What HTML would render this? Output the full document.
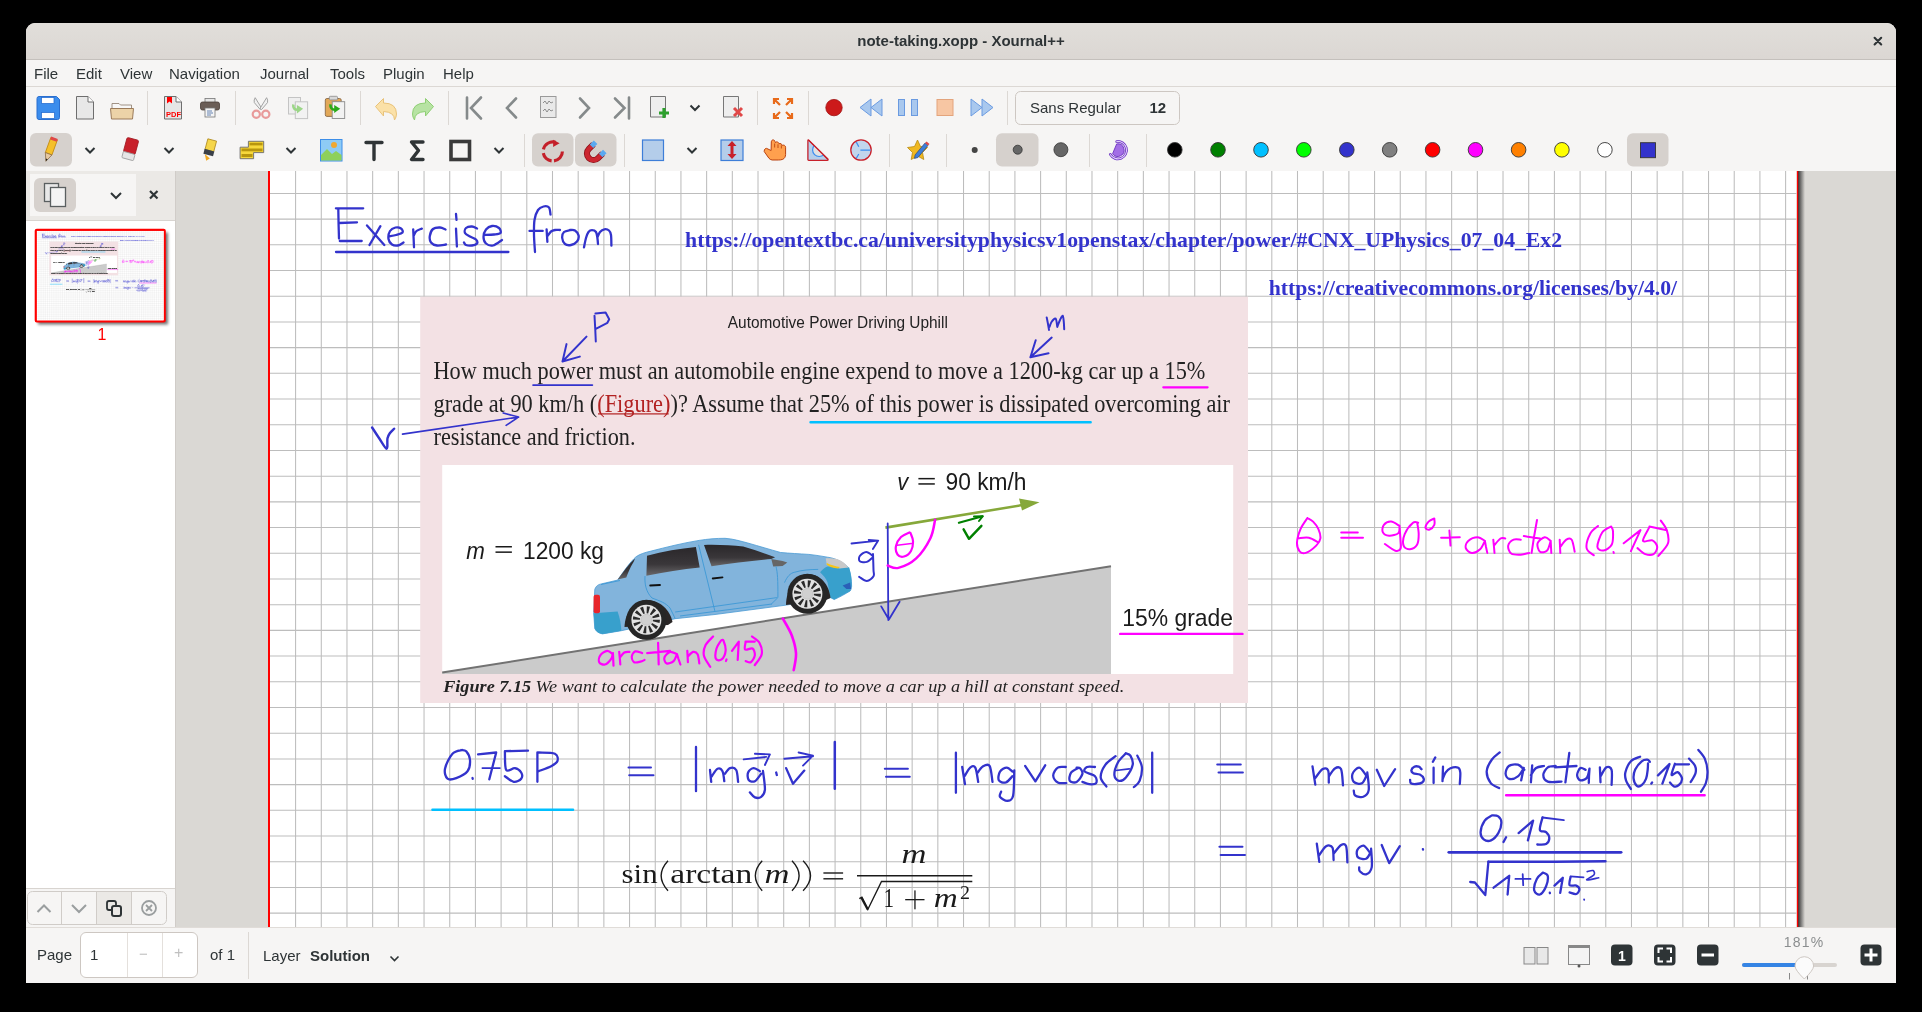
<!DOCTYPE html>
<html><head><meta charset="utf-8">
<style>
*{box-sizing:border-box}
html,body{margin:0;padding:0}
body{width:1922px;height:1012px;background:#000;position:relative;overflow:hidden;font-family:"Liberation Sans",sans-serif;color:#2e3436}
.a{position:absolute}
svg,div{-webkit-font-smoothing:antialiased}
body>svg,body>div{will-change:transform}
.menu span{position:absolute;top:0;font-size:15px;color:#2e3436}
</style></head><body>
<div class="a" style="left:26px;top:23px;width:1870px;height:960px;background:#f6f5f4;border-radius:9px 9px 0 0;overflow:hidden">
  <div class="a" style="left:0;top:0;width:1870px;height:37px;background:linear-gradient(#e1deda,#dbd7d3);border-bottom:1px solid #c4c0bc"></div>
</div>
<div class="a" style="left:26px;top:32px;width:1870px;text-align:center;font-weight:bold;font-size:15px;color:#2e3436">note-taking.xopp - Xournal++</div>
<svg class="a" style="left:1868px;top:32px" width="20" height="20" viewBox="1868 32 20 20"><path d="M1874.6 37.8L1881.2 44.4M1881.2 37.8L1874.6 44.4" stroke="#2e3436" stroke-width="2.1" stroke-linecap="round"/></svg>
<div class="menu a" style="left:0;top:65px;width:1922px;height:20px">
  <span style="left:34px">File</span><span style="left:76px">Edit</span><span style="left:120px">View</span><span style="left:169px">Navigation</span><span style="left:260px">Journal</span><span style="left:330px">Tools</span><span style="left:383px">Plugin</span><span style="left:443px">Help</span>
</div>
<div class="a" style="left:26px;top:86px;width:1870px;height:1px;background:#dcd8d4"></div>
<svg class="a" style="left:0;top:0" width="1922" height="1012" viewBox="0 0 1922 1012">
<g id="tb1">
 <!-- separators -->
 <g fill="#dcd8d4">
  <rect x="147" y="91" width="1" height="34"/><rect x="235" y="91" width="1" height="34"/><rect x="360" y="91" width="1" height="34"/>
  <rect x="448" y="91" width="1" height="34"/><rect x="757" y="91" width="1" height="34"/><rect x="808" y="91" width="1" height="34"/><rect x="1007" y="91" width="1" height="34"/>
  <rect x="524" y="134" width="1" height="33"/><rect x="624" y="134" width="1" height="33"/><rect x="889" y="134" width="1" height="33"/><rect x="946" y="134" width="1" height="33"/><rect x="1089" y="134" width="1" height="33"/><rect x="1146" y="134" width="1" height="33"/>
 </g>
 <!-- save -->
 <path d="M37 98.5q0-2 2-2h17.5l3 3v18q0 2-2 2h-18.5q-2 0-2-2z" fill="#3b8ded" stroke="#2a6fd0" stroke-width="1"/>
 <rect x="41.5" y="97.5" width="12.5" height="6" fill="#fff" stroke="#2a6fd0" stroke-width="0.8"/>
 <rect x="41.5" y="112.5" width="13" height="6" fill="#fff" stroke="#2a6fd0" stroke-width="0.8"/>
 <!-- new doc -->
 <path d="M76.5 96.5h11.5l5.5 5.5v17h-17z" fill="#e8e8e8" stroke="#6e6e6e" stroke-width="1"/>
 <path d="M88 96.5v5.5h5.5" fill="#fff" stroke="#6e6e6e" stroke-width="1"/>
 <!-- folder -->
 <path d="M112 103.5h7l1.5 1.5h11v5h-19.5z" fill="#f7f7f7" stroke="#8b7a6a" stroke-width="0.8"/>
 <path d="M110.5 108.5h23l-1 10.5h-21z" fill="#ecd3a8" stroke="#9b7b5a" stroke-width="1"/>
 <!-- pdf -->
 <path d="M164.5 96.5h11.5l5.5 5.5v17h-17z" fill="#e6e6e6" stroke="#6e6e6e" stroke-width="1"/>
 <path d="M176 96.5v5.5h5.5" fill="#fff" stroke="#6e6e6e" stroke-width="1"/>
 <path d="M167 97h5v6.5l-2.5-2l-2.5 2z" fill="#f00"/>
 <text x="166" y="117" font-size="7.5" font-weight="bold" fill="#f00" font-family="Liberation Sans">PDF</text>
 <!-- printer -->
 <rect x="205" y="98.5" width="10" height="4" fill="#e6e6e6" stroke="#777" stroke-width="0.8"/>
 <rect x="200.5" y="102" width="19" height="8" rx="2" fill="#6b5e57" stroke="#4a3f39" stroke-width="0.8"/>
 <rect x="205" y="108" width="10" height="9" fill="#f4f4f4" stroke="#777" stroke-width="0.8"/>
 <path d="M207 111h5M207 113h6M207 115h4" stroke="#5577aa" stroke-width="0.9"/>
 <!-- cut -->
 <path d="M255.2 97.7Q253.6 100 254.3 102.6L260.3 109.6L261.6 108.2z" fill="#f0f0f0" stroke="#9a9a9a" stroke-width="0.9" stroke-linejoin="round"/>
 <path d="M266.6 97.7Q268.2 100 267.5 102.6L261.5 109.6L260.2 108.2z" fill="#f0f0f0" stroke="#9a9a9a" stroke-width="0.9" stroke-linejoin="round"/>
 <circle cx="256.3" cy="114.2" r="3.6" fill="none" stroke="#e89a9a" stroke-width="2.2"/>
 <circle cx="265.8" cy="114.2" r="3.6" fill="none" stroke="#e89a9a" stroke-width="2.2"/>
 <!-- copy -->
 <rect x="288.5" y="97.5" width="12" height="16.5" fill="#efefef" stroke="#c4c4c4"/>
 <rect x="295.3" y="101.8" width="12.3" height="16.8" fill="#f2f2f2" stroke="#c4c4c4"/>
 <path d="M293.3 104.5Q292.8 109.5 297.5 109.8" fill="none" stroke="#9cd688" stroke-width="2.6"/>
 <path d="M296.9 105L303.1 108.8L296.9 113.4z" fill="#9cd688"/>
 <!-- paste -->
 <rect x="325.3" y="98.5" width="15.9" height="17.9" rx="1.6" fill="#e2a858" stroke="#8a6a48" stroke-width="0.9"/>
 <rect x="329.3" y="96.3" width="8.2" height="3.6" rx="1" fill="#d8d8d8" stroke="#8a8a8a" stroke-width="0.8"/>
 <rect x="332.2" y="101.7" width="12.5" height="16.8" fill="#f2f2f2" stroke="#8a8a8a" stroke-width="0.9"/>
 <path d="M330.5 104.3Q330 109.5 335 109.8" fill="none" stroke="#2aaa1a" stroke-width="2.6"/>
 <path d="M334.2 105L340.2 108.8L334.2 113.1z" fill="#2aaa1a"/>
 <!-- undo -->
 <path d="M375.5 106.5l8-8v4.5q13 0 13 11q0 3-2 6q0-8-11-8.5v4.5z" fill="#fbe1a8" stroke="#e8c27a" stroke-width="1"/>
 <!-- redo -->
 <path d="M433.5 106.5l-8-8v4.5q-13 0-13 11q0 3 2 6q0-8 11-8.5v4.5z" fill="#b7e3a3" stroke="#8fcf74" stroke-width="1"/>
 <!-- first/prev/goto/next/last -->
 <g stroke="#858a8b" stroke-width="2.6" fill="none" stroke-linecap="round">
  <path d="M467 97.5v21M481 97.5l-10 10.5l10 10.5"/>
  <path d="M516 98.5l-9 9.5l9 9.5"/>
  <path d="M580 98.5l9 9.5l-9 9.5"/>
  <path d="M615 98.5l9.5 9.5l-9.5 9.5M629 97.5v21"/>
 </g>
 <rect x="540.5" y="96.5" width="15.5" height="21" fill="#e9e9e9" stroke="#9a9a9a"/>
 <path d="M543 103l2-2l2 3l2-3l2 2l2-1M543 111l2-2l2 3l2-3l2 2l2-1" stroke="#777" stroke-width="0.8" fill="none"/>
 <!-- insert page -->
 <path d="M650.5 96.5h15v20.5h-15z" fill="#eee" stroke="#777"/>
 <path d="M664 108v10M659 113h10" stroke="#2da02d" stroke-width="3.2"/>
 <!-- dropdown -->
 <path d="M690.5 105.5l4.5 4.5l4.5-4.5" stroke="#2e3436" stroke-width="2" fill="none"/>
 <!-- delete page -->
 <path d="M723.5 96.5h15v20.5h-15z" fill="#eee" stroke="#777"/>
 <path d="M734 108l8 8M742 108l-8 8" stroke="#e04848" stroke-width="3"/>
 <!-- fullscreen -->
 <g stroke="#e86a1a" stroke-width="2.2" fill="none">
  <path d="M774 99l6 6M774 104v-5h5M792 99l-6 6M792 104v-5h-5M774 118l6-6M774 113v5h5M792 118l-6-6M792 113v5h-5"/>
 </g>
 <!-- record -->
 <circle cx="834" cy="107.6" r="8.2" fill="#cc1a1a" stroke="#a01010" stroke-width="0.8"/>
 <!-- rewind -->
 <path d="M860 107.5l11-8.5v17zM871 107.5l11-8.5v17z" fill="#a9c8ee" stroke="#6a9ae0" stroke-width="1"/>
 <!-- pause -->
 <rect x="898.5" y="99.5" width="6" height="16" fill="#a9c8ee" stroke="#6a9ae0"/><rect x="911.5" y="99.5" width="6" height="16" fill="#a9c8ee" stroke="#6a9ae0"/>
 <!-- stop -->
 <rect x="937" y="99.5" width="16" height="16" fill="#f7c6a3" stroke="#e3a47c"/>
 <!-- ffwd -->
 <path d="M993 107.5l-11-8.5v17zM982 107.5l-11-8.5v17z" fill="#a9c8ee" stroke="#6a9ae0" stroke-width="1"/>
 <!-- font button -->
 <rect x="1015.5" y="91.5" width="164" height="33" rx="5" fill="#f6f5f4" stroke="#cdc7c2"/>
 <text x="1030" y="113.3" font-size="15" fill="#2e3436" font-family="Liberation Sans">Sans Regular</text>
 <text x="1149.5" y="113.3" font-size="15" font-weight="bold" fill="#2e3436" font-family="Liberation Sans">12</text>
</g>
<g id="tb2">
 <!-- selected bgs -->
 <rect x="30" y="133" width="42" height="33.5" rx="6" fill="#d6d1cd"/>
 <rect x="532" y="133.3" width="41.5" height="33.2" rx="6" fill="#d6d1cd"/>
 <rect x="575" y="133.3" width="41.5" height="33.2" rx="6" fill="#d6d1cd"/>
 <rect x="996" y="133.3" width="42.5" height="33.2" rx="6" fill="#d6d1cd"/>
 <rect x="1627" y="133.2" width="41.5" height="33.3" rx="6" fill="#d6d1cd"/>
 <!-- pencil -->
 <g transform="rotate(20 50 150)">
  <rect x="46.5" y="138" width="7" height="16" fill="#f5c02a" stroke="#c28a10" stroke-width="0.8"/>
  <rect x="46.5" y="137" width="7" height="3" fill="#e04848"/>
  <path d="M46.5 154l3.5 8l3.5-8z" fill="#e6c8a0" stroke="#8a6a40" stroke-width="0.7"/>
  <path d="M49 159.5l1 2.5l1-2.5z" fill="#222"/>
 </g>
 <!-- chevrons -->
 <g stroke="#2e3436" stroke-width="2" fill="none">
  <path d="M85.5 148l4.5 4.5l4.5-4.5"/><path d="M164.5 148l4.5 4.5l4.5-4.5"/><path d="M286.5 148l4.5 4.5l4.5-4.5"/>
  <path d="M494.5 148l4.5 4.5l4.5-4.5"/><path d="M687.5 148l4.5 4.5l4.5-4.5"/>
 </g>
 <!-- eraser -->
 <g transform="rotate(15 130 150)">
  <rect x="124" y="138.5" width="12" height="15" rx="1.5" fill="#c8202a" stroke="#a01820" stroke-width="0.8"/>
  <rect x="124" y="153" width="12" height="6.5" rx="1" fill="#e6e6e6" stroke="#999" stroke-width="0.8"/>
 </g>
 <!-- highlighter -->
 <g transform="rotate(15 209 150)">
  <rect x="205" y="139.5" width="9" height="11" fill="#f6d64a" stroke="#b08a20" stroke-width="0.8"/>
  <rect x="204.5" y="150" width="10" height="5" fill="#3a4048"/>
  <path d="M206 155l3 6l3-3z" fill="#f0a820"/>
 </g>
 <!-- word text -->
 <path d="M240.1 147.2H248.4V141.3H263.7V152.6H253.6V158.7H240.1z" fill="#f7d83c" stroke="#6a6a6a" stroke-width="0.9"/>
 <g fill="#b8960e"><rect x="249.5" y="142.8" width="13" height="2.6"/><rect x="241.5" y="148.5" width="21" height="2.8"/><rect x="241.5" y="154" width="11" height="3"/></g>
 <!-- image -->
 <rect x="320.5" y="139.5" width="21.5" height="21.5" fill="#8ecbf5" stroke="#3d8ee8"/>
 <circle cx="334" cy="145" r="3" fill="#f0a830"/>
 <path d="M321 155l6-6l5 5l4-3l5.5 4v5.5h-20.5z" fill="#8ed05a"/>
 <!-- T -->
 <path d="M366 142.5h16M374 142.5v17" stroke="#2f3436" stroke-width="3.4" stroke-linecap="round" fill="none"/>
 <!-- sigma -->
 <path d="M423 142h-11.5l7 8.5l-7 9h11.5" stroke="#2f3436" stroke-width="3.4" stroke-linecap="round" stroke-linejoin="round" fill="none"/>
 <!-- rect -->
 <rect x="451" y="141.5" width="18.5" height="18" fill="none" stroke="#3a3a3a" stroke-width="3.6"/>
 <!-- rotation snapping -->
 <g fill="none" stroke="#c4202a" stroke-width="3.1">
  <path d="M543.4 149.4A9.6 9.6 0 0 1 555.5 142.3"/>
  <path d="M543.3 153.1A9.6 9.6 0 0 0 551.6 160.9"/>
  <path d="M554 160.9A9.6 9.6 0 0 0 562.4 151.4"/>
 </g>
 <path d="M553.1 139.8L559.6 143.3L553.1 147z" fill="#c4202a"/>
 <!-- magnet -->
 <path d="M593.4 144.4L588.9 148.9A6.5 6.5 0 0 0 598.1 158.1L602.6 153.6" fill="none" stroke="#8a1018" stroke-width="6.2"/>
 <path d="M593.4 144.4L588.9 148.9A6.5 6.5 0 0 0 598.1 158.1L602.6 153.6" fill="none" stroke="#cc2630" stroke-width="4.6"/>
 <path d="M595.6 142.2L591.5 146.3M604.8 151.4L600.7 155.5" stroke="#5aa8f0" stroke-width="5"/>
 <!-- select rect -->
 <rect x="642.5" y="140" width="21" height="20.5" fill="#b4cdea" stroke="#3d7ed8" stroke-width="1.2"/>
 <!-- vertical space -->
 <rect x="721" y="140" width="22" height="20.5" fill="#b4cdea" stroke="#3d7ed8" stroke-width="1.2"/>
 <path d="M732 143v14" stroke="#c8202a" stroke-width="3"/><path d="M727.5 146l4.5-5l4.5 5zM727.5 154l4.5 5l4.5-5z" fill="#c8202a"/>
 <!-- hand -->
 <path d="M764.2 151.5L764.4 150C765 148.5 766 148.2 766.6 148.4L771.1 150.5L771.3 141.8C771.5 140.3 772.3 139.8 773.3 139.9C774.3 140 774.9 140.7 775.1 141.8L775.4 142.6C775.8 141.9 776.6 141.7 777.4 142C778.4 142.4 778.9 143 779.1 143.7C779.6 143.4 780.4 143.4 781 143.8C781.7 144.2 782.1 144.8 782.3 145.3C782.9 145 783.8 145 784.5 145.4C785.2 145.8 785.6 146.5 785.6 147.3V154.6C785.5 156.8 784.5 158.5 782.8 159.3C781.5 159.8 780 160 778.6 160H772.2C770.8 159.9 769.8 159.2 768.9 158.2z" fill="#ffa04e" stroke="#b8400e" stroke-width="1"/>
 <path d="M774.6 143.5V147.5M778 144.3V148M781.4 145.3V148.5" stroke="#c8561a" stroke-width="1.1"/>
 <!-- setsquare -->
 <defs><clipPath id="sqc"><path d="M807.9 139.9L827.9 159.5L807.9 160.2z"/></clipPath></defs>
 <path d="M808.4 139.9L827.9 159.2Q828.6 160.3 827.3 160.3H808.7Q807.9 160.3 807.9 159.5V140.5Q808 139.6 808.4 139.9z" fill="#b6cfea" stroke="#c8202a" stroke-width="1.3" stroke-linejoin="round"/>
 <circle cx="819.2" cy="149.9" r="6.6" fill="#e2e2e2" stroke="#3a8ef0" stroke-width="1.2" clip-path="url(#sqc)"/>
 <path d="M808.4 139.9L827.9 159.2" stroke="#c8202a" stroke-width="1.3"/>
 <!-- compass -->
 <circle cx="861" cy="150" r="10.2" fill="#c2d6ec" stroke="#c8202a" stroke-width="1.3"/>
 <path d="M860.4 150.2H870.6M856.3 142.1L858.8 146.8M856.3 158.3L858.8 154" stroke="#3a8ef0" stroke-width="1.2"/>
 <!-- star -->
 <path d="M917.5 140l3 6.5l7 1l-5 5l1.3 7l-6.3-3.5l-6.3 3.5l1.3-7l-5-5l7-1z" fill="#f0b820" stroke="#b88a10" stroke-width="0.8"/>
 <path d="M915 155l10-12l3 2.5l-10 12l-3.5 1z" fill="#3d7ed8" stroke="#2a3f6a" stroke-width="0.6"/>
 <path d="M925 143l1.5-1.5l3 2.5l-1.5 1.5z" fill="#e04848"/>
 <!-- thickness dots -->
 <circle cx="974.7" cy="150" r="3" fill="#444"/>
 <circle cx="1017.7" cy="149.7" r="4.5" fill="#666" stroke="#333" stroke-width="0.8"/>
 <circle cx="1060.9" cy="149.7" r="7" fill="#666" stroke="#333" stroke-width="0.8"/>
 <!-- fill -->
 <path d="M1116.7 141.5A8.7 8.7 0 1 1 1110.3 154.45" fill="none" stroke="#6a30c0" stroke-width="2.7" stroke-linecap="round"/>
 <path d="M1116.7 141.5A8.7 8.7 0 1 1 1110.3 154.45" fill="none" stroke="#e2ccff" stroke-width="1.1" stroke-linecap="round"/>
 <path d="M1116.7 143.9A6.3 6.3 0 1 1 1112.6 153.7z" fill="#a36ee6" stroke="#6a30c0" stroke-width="0.9"/>
 <!-- colors -->
 <g stroke="#333" stroke-width="0.9">
  <circle cx="1174.8" cy="149.8" r="7.3" fill="#000"/>
  <circle cx="1218" cy="149.8" r="7.3" fill="#008000"/>
  <circle cx="1261" cy="149.8" r="7.3" fill="#00c0ff"/>
  <circle cx="1303.8" cy="149.8" r="7.3" fill="#00ff00"/>
  <circle cx="1346.8" cy="149.8" r="7.3" fill="#3333cc"/>
  <circle cx="1389.7" cy="149.8" r="7.3" fill="#808080"/>
  <circle cx="1432.6" cy="149.8" r="7.3" fill="#ff0000"/>
  <circle cx="1475.5" cy="149.8" r="7.3" fill="#ff00ff"/>
  <circle cx="1518.6" cy="149.8" r="7.3" fill="#ff8000"/>
  <circle cx="1561.9" cy="149.8" r="7.3" fill="#ffff00"/>
  <circle cx="1604.9" cy="149.8" r="7.3" fill="#ffffff"/>
  <rect x="1640.5" y="142.7" width="15" height="15" fill="#3333cc"/>
 </g>
</g>
</svg>

<div class="a" style="left:176px;top:171px;width:1720px;height:756px;background:#dad8d4"></div>
<svg class="a" style="left:0;top:0" width="1922" height="1012" viewBox="0 0 1922 1012">
 <defs><clipPath id="cv"><rect x="176" y="171" width="1720" height="756"/></clipPath>
 <linearGradient id="shR" x1="0" x2="1"><stop offset="0" stop-color="#333"/><stop offset="1" stop-color="#dad8d4"/></linearGradient>
 <clipPath id="thc"><rect x="36.8" y="230.8" width="127" height="89.3"/></clipPath></defs>
 <g clip-path="url(#cv)">
  <rect x="1798" y="171" width="7" height="756" fill="url(#shR)"/>
  
<g id="page">
 <rect x="269.9" y="167.7" width="1526.5" height="1079.3" fill="#fff"/>
 <path d="M295.59 167.7V1247M321.28 167.7V1247M346.97 167.7V1247M372.66 167.7V1247M398.35 167.7V1247M424.04 167.7V1247M449.73 167.7V1247M475.42 167.7V1247M501.11 167.7V1247M526.8 167.7V1247M552.49 167.7V1247M578.18 167.7V1247M603.87 167.7V1247M629.56 167.7V1247M655.25 167.7V1247M680.94 167.7V1247M706.63 167.7V1247M732.32 167.7V1247M758.01 167.7V1247M783.7 167.7V1247M809.39 167.7V1247M835.08 167.7V1247M860.77 167.7V1247M886.46 167.7V1247M912.15 167.7V1247M937.84 167.7V1247M963.53 167.7V1247M989.22 167.7V1247M1014.91 167.7V1247M1040.6 167.7V1247M1066.29 167.7V1247M1091.98 167.7V1247M1117.67 167.7V1247M1143.36 167.7V1247M1169.05 167.7V1247M1194.74 167.7V1247M1220.43 167.7V1247M1246.12 167.7V1247M1271.81 167.7V1247M1297.5 167.7V1247M1323.19 167.7V1247M1348.88 167.7V1247M1374.57 167.7V1247M1400.26 167.7V1247M1425.95 167.7V1247M1451.64 167.7V1247M1477.33 167.7V1247M1503.02 167.7V1247M1528.71 167.7V1247M1554.4 167.7V1247M1580.09 167.7V1247M1605.78 167.7V1247M1631.47 167.7V1247M1657.16 167.7V1247M1682.85 167.7V1247M1708.54 167.7V1247M1734.23 167.7V1247M1759.92 167.7V1247M1785.61 167.7V1247M269.9 193.4H1796.4M269.9 219.11H1796.4M269.9 244.81H1796.4M269.9 270.51H1796.4M269.9 296.22H1796.4M269.9 321.92H1796.4M269.9 347.63H1796.4M269.9 373.34H1796.4M269.9 399.04H1796.4M269.9 424.75H1796.4M269.9 450.45H1796.4M269.9 476.15H1796.4M269.9 501.86H1796.4M269.9 527.56H1796.4M269.9 553.27H1796.4M269.9 578.98H1796.4M269.9 604.68H1796.4M269.9 630.38H1796.4M269.9 656.09H1796.4M269.9 681.79H1796.4M269.9 707.5H1796.4M269.9 733.2H1796.4M269.9 758.91H1796.4M269.9 784.61H1796.4M269.9 810.32H1796.4M269.9 836.02H1796.4M269.9 861.73H1796.4M269.9 887.43H1796.4M269.9 913.14H1796.4M269.9 938.84H1796.4M269.9 964.55H1796.4M269.9 990.25H1796.4M269.9 1015.96H1796.4M269.9 1041.66H1796.4M269.9 1067.37H1796.4M269.9 1093.08H1796.4M269.9 1118.78H1796.4M269.9 1144.48H1796.4M269.9 1170.19H1796.4M269.9 1195.89H1796.4M269.9 1221.6H1796.4" stroke="#bdbdbd" style="stroke-width:calc(var(--g,1)*1.05px)" fill="none"/>
 <text x="685.1" y="246.5" font-family="Liberation Serif" font-weight="bold" font-size="21.5" fill="#3333cc" style="stroke:var(--tsb,none);stroke-width:var(--tsw,0)" textLength="877" lengthAdjust="spacingAndGlyphs">https://opentextbc.ca/universityphysicsv1openstax/chapter/power/#CNX_UPhysics_07_04_Ex2</text>
 <text x="1268.8" y="294.5" font-family="Liberation Serif" font-weight="bold" font-size="21.5" fill="#3333cc" style="stroke:var(--tsb,none);stroke-width:var(--tsw,0)" textLength="408.3" lengthAdjust="spacingAndGlyphs">https://creativecommons.org/licenses/by/4.0/</text>
 <rect x="420.2" y="296.7" width="827.8" height="406.3" fill="#f3e1e4"/>
 <text x="727.8" y="327.8" style="stroke:var(--ts,none);stroke-width:var(--tsw,0)" font-family="Liberation Sans" font-size="16.6" fill="#222" textLength="220.1" lengthAdjust="spacingAndGlyphs">Automotive Power Driving Uphill</text>
 <g font-family="Liberation Serif" font-size="25" fill="#222" style="stroke:var(--ts,none);stroke-width:var(--tsw,0)">
  <text x="433.5" y="378.8" textLength="771.9" lengthAdjust="spacingAndGlyphs">How much power must an automobile engine expend to move a 1200-kg car up a 15%</text>
  <text x="433.5" y="411.5" textLength="796.5" lengthAdjust="spacingAndGlyphs">grade at 90 km/h (<tspan fill="#b22222">(Figure)</tspan>)? Assume that 25% of this power is dissipated overcoming air</text>
  <text x="433.5" y="445.2" textLength="202" lengthAdjust="spacingAndGlyphs">resistance and friction.</text>
 </g>
 <rect x="598" y="413.3" width="70.7" height="1.2" fill="#b22222"/>
 <rect x="442.2" y="465" width="791" height="209" fill="#fff"/>
 <path d="M442.2 672.5L1111 566.2V674H442.2z" fill="#cbcbcb"/>
 <path d="M442.2 672.5L1111 566.2" stroke="#727272" stroke-width="2"/>
 <path d="M885.4 527.6L1024 504.8" stroke="#86a83a" stroke-width="2.6"/>
 <path d="M1039.5 502.3L1019 498.5L1022 510.5z" fill="#86a83a"/>
 <g font-family="Liberation Sans" font-size="24.4" fill="#1a1a1a" style="stroke:var(--ts,none);stroke-width:var(--tsw,0)">
  <text x="466.3" y="558.8" font-style="italic" textLength="18.6" lengthAdjust="spacingAndGlyphs">m</text><rect x="495.5" y="546" width="16.4" height="1.5"/><rect x="495.5" y="551.4" width="16.4" height="1.5"/><text x="523" y="558.8" textLength="81" lengthAdjust="spacingAndGlyphs">1200 kg</text>
  <text x="897.3" y="490.3" font-style="italic" textLength="11" lengthAdjust="spacingAndGlyphs">v</text><rect x="918.4" y="477.9" width="16.4" height="1.5"/><rect x="918.4" y="483.2" width="16.4" height="1.5"/><text x="945.5" y="490.3" textLength="81" lengthAdjust="spacingAndGlyphs">90 km/h</text>
  <text x="1122.3" y="626.4" textLength="110.8" lengthAdjust="spacingAndGlyphs">15% grade</text>
 </g>
 <g id="car">
 <defs>
  <linearGradient id="win" x1="0" y1="0" x2="0" y2="1"><stop offset="0" stop-color="#2a272a"/><stop offset="0.6" stop-color="#3a373a"/><stop offset="1" stop-color="#6a686a"/></linearGradient>
 </defs>
 <path d="M593.7 613L594.8 589.3C596 586 598 584.5 601.3 583.9L617.6 580.1C624 571 630 562 636.1 556.7C640 554 645 552.5 650.2 551.3C667 547 683 543 699.1 540.4C708 539 716 538.3 725 538.3C733 538.8 740 541 747.8 543C760 546.5 770 549.5 780.7 552.5C790 553.3 799 553.8 808.9 554.4C815 555 821 556 827.6 557.2C834 558 842 561 848.3 567.5C851 574 851.6 580 851.6 586.3C851.5 588 851 590 850.1 591C845 594 840 597 834.2 599.5L830.4 597.6L786.3 605.1L715 614.5L675.2 618.7L621.4 630.7L602.4 633.9C598 633 596 631 594.8 628.5z" fill="#82b4dc" stroke="#4a9bd4" stroke-width="0.8"/>
 <path d="M593.7 613.3L617.6 611.6C620 618 621 625 621.4 630.7L602.4 633.9C598.5 633.5 596 631.5 594.8 628.5z" fill="#38a0cc"/>
 <rect x="593.6" y="594.8" width="6.4" height="18.5" rx="2" fill="#e8262c"/>
 <path d="M820.1 572.2C823 569 825 567.5 827.6 566.6L849.2 567.5C851 574 851.6 580 851.6 586.3L850.1 591L834.2 599.5L830.4 597.6C829 590 828 585 827.6 582.6C826 578 823 575 820.1 572.2z" fill="#38a0cc"/>
 <path d="M842.6 585.4L850.1 582.6L851.1 589.1L846.4 589.1z" fill="#2a60b8"/>
 <path d="M825.7 558.2C830 558 834 558.5 837 559.1C842 561 846 564 848.3 567.5L839.8 568.5C835 567.5 830 566.5 826.7 564.7z" fill="#c8c8c8"/>
 <path d="M826.7 563C831 565 836 566.5 840 567L838 568.5C833 568 829 566.5 826.7 564.7z" fill="#f5c518"/>
 <path d="M617.6 579.6C623 572 629 564 635 558.4C634 561 633.5 562 632.8 563.3C630 568 628 573 626.3 577.4z" fill="url(#win)"/>
 <path d="M647 555.7C663 551.5 680 548.5 695.9 547L699.7 567.6C682 569.5 664 572.5 646.4 575.8z" fill="url(#win)"/>
 <path d="M704 545C718 544.5 732 545.5 743.2 546.5C754 549.5 765 553.5 775.1 557.2L771.3 559.1C750 561 732 563.5 711.5 566.3z" fill="url(#win)"/>
 <path d="M771.3 559.1L782.6 561L787.3 562.4L782.6 566.1L773.2 566.6z" fill="#666"/>
 <g fill="none" stroke="#3d98d6" stroke-width="0.9">
  <path d="M698.6 544.8L714.9 611.1"/>
  <path d="M645 576C644.5 584 646 592 652 598C660 601 666 603 670 608C672 612 674 616 675.2 618.7"/>
  <path d="M776 566.6C777.5 572 778 580 777.9 597.6L771.3 604.1"/>
  <path d="M675.2 612L776.9 597.6M680 616L772 604"/>
  <path d="M784.5 582.6C787 577 790 573 794.8 572.2C802 570 810 569.5 818.2 569.4"/>
  <path d="M601 584.5L620 580.5"/>
 </g>
 <path d="M650.2 585.5L660 585M712.7 578.5L722.5 577.4" stroke="#111" stroke-width="1.8" stroke-linecap="round"/>
 <path d="M624.5 627C625 612 634 601 646.4 600C660 600 670 610 672.5 622L668 625z" fill="#2a2626"/>
 <path d="M786 605C786 590 795 575 807.4 574C820 574 829 584 830.5 598L826 600z" fill="#2a2626"/>
 <g>
  <circle cx="646.4" cy="619.8" r="20" fill="#262626"/>
  <circle cx="646.4" cy="619.8" r="15" fill="#e2e2e2"/>
  <circle cx="646.4" cy="619.8" r="10" fill="none" stroke="#2a2a2a" stroke-width="7" stroke-dasharray="2.4 2.84"/>
  <circle cx="646.4" cy="619.8" r="5.5" fill="#d0d0d0" stroke="#bbb" stroke-width="0.6"/>
  <circle cx="807.4" cy="593.8" r="20" fill="#262626"/>
  <circle cx="807.4" cy="593.8" r="15" fill="#e2e2e2"/>
  <circle cx="807.4" cy="593.8" r="10" fill="none" stroke="#2a2a2a" stroke-width="7" stroke-dasharray="2.4 2.84"/>
  <circle cx="807.4" cy="593.8" r="5.5" fill="#d0d0d0" stroke="#bbb" stroke-width="0.6"/>
 </g>
</g>

 <text x="443.2" y="691.9" style="stroke:var(--ts,none);stroke-width:var(--tsw,0)" font-family="Liberation Serif" font-style="italic" font-size="17.2" fill="#222" textLength="681" lengthAdjust="spacingAndGlyphs"><tspan font-weight="bold">Figure 7.15</tspan> We want to calculate the power needed to move a car up a hill at constant speed.</text>
 <g font-family="Liberation Serif" fill="#1a1a1a" style="stroke:var(--ts,none);stroke-width:var(--tsw,0)">
  <text x="621.6" y="883" font-size="27" textLength="36" lengthAdjust="spacingAndGlyphs">sin</text>
  <text x="670.3" y="883" font-size="27" textLength="82" lengthAdjust="spacingAndGlyphs">arctan</text>
  <text x="764.5" y="883" font-size="27" font-style="italic" textLength="25" lengthAdjust="spacingAndGlyphs">m</text>
  <path d="M668 860.8Q654.3 875.8 668 890.8M762.2 860.8Q748.5 875.8 762.2 890.8M792 860.8Q806.2 875.8 792 890.8M803.1 860.8Q817.9 875.8 803.1 890.8" fill="none" stroke="#1a1a1a" stroke-width="1.35"/>
  <rect x="823.4" y="872.3" width="19.7" height="1.4"/><rect x="823.4" y="878.1" width="19.7" height="1.4"/>
  <text x="901.5" y="862.8" font-size="27" font-style="italic" textLength="25" lengthAdjust="spacingAndGlyphs">m</text>
  <rect x="857" y="875" width="115.3" height="1.5"/>
  <path d="M859.3 898.6L861.9 897.1L867.8 909.5L881.5 881.5H972.3" fill="none" stroke="#1a1a1a" stroke-width="1.35"/>
  <path d="M861.5 897.8L867.8 909.5" stroke="#1a1a1a" stroke-width="2.4"/>
  <text x="883.6" y="907.1" font-size="27" textLength="10.5" lengthAdjust="spacingAndGlyphs">1</text>
  <rect x="905.2" y="899" width="19.3" height="1.3"/><rect x="914.3" y="890.4" width="1.3" height="18.9"/>
  <text x="933.8" y="907.1" font-size="27" font-style="italic" textLength="24" lengthAdjust="spacingAndGlyphs">m</text>
  <text x="960" y="898.6" font-size="19" textLength="10" lengthAdjust="spacingAndGlyphs">2</text>
 </g>
 <path d="M335.9 208.3L363.2 208.3M338.3 209L338.6 225L339 238.5M339 223L357 222.3M339.8 241L361.7 241M367 225.4L384.3 245M380.4 226.2L369.5 245M389 236.5C390.17 236.25 393.75 235.67 396 235C398.25 234.33 401.67 233.58 402.5 232.5C403.33 231.42 402.17 229.33 401 228.5C399.83 227.67 397.33 227.08 395.5 227.5C393.67 227.92 391.17 229.08 390 231C388.83 232.92 388.17 236.75 388.5 239C388.83 241.25 390.42 243.42 392 244.5C393.58 245.58 396.08 245.83 398 245.5C399.92 245.17 402.58 243 403.5 242.5M413.2 229.3L413.6 238L414 247.3M413.5 236C414 235.17 415.12 232.23 416.5 231C417.88 229.77 420.92 229 421.8 228.6M445.5 229.5C444.58 229.17 442.08 227.58 440 227.5C437.92 227.42 434.7 227.58 433 229C431.3 230.42 430.13 233.75 429.8 236C429.47 238.25 429.8 240.92 431 242.5C432.2 244.08 434.5 245.17 437 245.5C439.5 245.83 444.5 244.67 446 244.5M456 228.6L456.9 246.5M456 214L456.5 219.8M477 228.5C476.17 228.17 473.83 226.58 472 226.5C470.17 226.42 467.17 226.92 466 228C464.83 229.08 464.33 231.58 465 233C465.67 234.42 468.17 235.42 470 236.5C471.83 237.58 474.83 238.33 476 239.5C477.17 240.67 477.67 242.5 477 243.5C476.33 244.5 473.83 245.25 472 245.5C470.17 245.75 467.33 245.5 466 245C464.67 244.5 464.33 242.92 464 242.5M484 235C485.67 234.92 491.25 234.83 494 234.5C496.75 234.17 499.67 234.08 500.5 233C501.33 231.92 500.42 229.17 499 228C497.58 226.83 494.17 225.75 492 226C489.83 226.25 487.42 227.67 486 229.5C484.58 231.33 483.5 234.67 483.5 237C483.5 239.33 484.42 242.08 486 243.5C487.58 244.92 490.33 246.08 493 245.5C495.67 244.92 500.5 240.92 502 240M336 252L508.4 252M535 252C534.83 249.17 534.08 240.33 534 235C533.92 229.67 533.83 224.17 534.5 220C535.17 215.83 536.5 212.25 538 210C539.5 207.75 541.67 206.92 543.5 206.5C545.33 206.08 547.83 206.17 549 207.5C550.17 208.83 550.25 213.33 550.5 214.5M529.5 230.9L542.7 230.9M546.6 229.3L547 236L547.4 241.8M547.5 236C548.08 235.25 549.75 232.5 551 231.5C552.25 230.5 553.5 230.25 555 230C556.5 229.75 559.17 230 560 230M570.5 230C569.42 230.33 565.38 230.67 564 232C562.62 233.33 562.03 236 562.2 238C562.37 240 563.53 242.83 565 244C566.47 245.17 569 245.42 571 245C573 244.58 575.73 243.08 577 241.5C578.27 239.92 578.93 237.33 578.6 235.5C578.27 233.67 576.43 231.42 575 230.5C573.57 229.58 570.83 230.08 570 230M584 247.3C584.33 245.75 585.25 240.55 586 238C586.75 235.45 587.5 233.32 588.5 232C589.5 230.68 590.75 230.1 592 230.1C593.25 230.1 595.1 230.68 596 232C596.9 233.32 597.07 236 597.4 238C597.73 240 597.9 243 598 244M597.4 237.5C597.83 236.58 598.83 233.37 600 232C601.17 230.63 602.9 229.55 604.4 229.3C605.9 229.05 607.9 229.55 609 230.5C610.1 231.45 610.6 232.47 611 235C611.4 237.53 611.33 243.92 611.4 245.7M462.5 750C460.83 750.62 455.42 750.58 452.5 753.7C449.58 756.82 445.83 764.53 445 768.7C444.17 772.87 445.63 777.13 447.5 778.7C449.37 780.27 452.87 779.35 456.2 778.1C459.53 776.85 465.2 774.22 467.5 771.2C469.8 768.18 470.22 763.33 470 760C469.78 756.67 467.67 752.87 466.2 751.2C464.73 749.53 462.03 750.2 461.2 750M472.5 778L472.7 778.8M478.1 754.4L496.2 752.5L489.3 779.3M504.9 751.2L528 750.6M504.9 751.9C505.12 754.92 504.53 767.3 506.2 770C507.87 772.7 512.4 767.68 514.9 768.1C517.4 768.52 520.15 770.73 521.2 772.5C522.25 774.27 522.45 777.15 521.2 778.7C519.95 780.25 516.42 782.22 513.7 781.8C510.98 781.38 506.37 777.13 504.9 776.2M537.4 781.8L537.4 752.5M538.6 752.5C541.32 752.7 551.77 752.25 554.9 753.7C558.03 755.15 558.03 759.12 557.4 761.2C556.77 763.28 554.23 764.53 551.1 766.2C547.97 767.87 540.68 770.37 538.6 771.2M696 746.9L696 791.2M710 770L711.2 781.8M711.8 776.2C712.75 774.95 715.72 769.53 717.5 768.7C719.28 767.87 721.37 769.12 722.5 771.2C723.63 773.28 724 779.53 724.3 781.2M725 773.7C725.83 772.77 728.13 768.72 730 768.1C731.87 767.48 734.85 767.72 736.2 770C737.55 772.28 737.78 779.83 738.1 781.8M759.9 771.2C758.87 770.68 755.67 767.88 753.7 768.1C751.73 768.32 748.93 770.52 748.1 772.5C747.27 774.48 747.57 778.55 748.7 780C749.83 781.45 752.82 782.25 754.9 781.2C756.98 780.15 760.15 774.95 761.2 773.7M763 771C763.32 774.15 765.2 785.6 764.9 789.9C764.6 794.2 762.87 795.55 761.2 796.8C759.53 798.05 756.78 798.13 754.9 797.4C753.02 796.67 750.73 793.23 749.9 792.4M776.2 772.5L776.8 775M786.1 768.1L793 783.7L804.3 770.6M955.9 752.7L955.9 792.8M962.2 767L965 784.2M964.5 776.2C965.45 774.77 968.4 769.03 970.2 767.6C972 766.17 973.97 765.22 975.3 767.6C976.63 769.98 977.72 779.52 978.2 781.9M977.6 772.8C978.47 771.75 980.8 767.65 982.8 766.5C984.8 765.35 987.98 763.33 989.6 765.9C991.22 768.47 992.02 779.23 992.5 781.9M1012.5 771.6C1011.55 770.93 1008.88 767.6 1006.8 767.6C1004.72 767.6 1001.33 769.5 1000 771.6C998.67 773.7 997.85 778.38 998.8 780.2C999.75 782.02 1003.42 783.17 1005.7 782.5C1007.98 781.83 1011.37 777.25 1012.5 776.2M1014.3 770.5C1014.1 774.7 1014.25 790.65 1013.1 795.7C1011.95 800.75 1009.58 800.62 1007.4 800.8C1005.22 800.98 1001.05 798.32 1000 796.8C998.95 795.28 1000.92 792.55 1001.1 791.7M1025.1 765.9L1035.4 781.4L1045.2 765.3M1065.8 767C1064.47 767.1 1059.9 766.17 1057.8 767.6C1055.7 769.03 1053.2 773.12 1053.2 775.6C1053.2 778.08 1055.62 781.25 1057.8 782.5C1059.98 783.75 1064.88 783 1066.3 783.1M1077.8 768.2C1076.65 768.97 1072.23 770.7 1070.9 772.8C1069.57 774.9 1068.85 779.28 1069.8 780.8C1070.75 782.32 1074.5 783.05 1076.6 781.9C1078.7 780.75 1081.82 776.18 1082.4 773.9C1082.98 771.62 1081.07 769.25 1080.1 768.2C1079.13 767.15 1077.18 767.7 1076.6 767.6M1095 767C1093.67 767 1088.72 766.23 1087 767C1085.28 767.77 1083.37 770.07 1084.7 771.6C1086.03 773.13 1093.1 774.28 1095 776.2C1096.9 778.12 1097.07 781.77 1096.1 783.1C1095.13 784.43 1091.48 784.4 1089.2 784.2C1086.92 784 1083.53 782.28 1082.4 781.9M1115.6 756.2C1113.88 757.63 1107.78 761.27 1105.3 764.8C1102.82 768.33 1100.52 773.78 1100.7 777.4C1100.88 781.02 1105.45 784.98 1106.4 786.5M1125.9 753.3C1124.57 754.83 1119.82 758.87 1117.9 762.5C1115.98 766.13 1114.22 772.05 1114.4 775.1C1114.58 778.15 1117.08 780.42 1119 780.8C1120.92 781.18 1123.62 780.07 1125.9 777.4C1128.18 774.73 1131.95 768.43 1132.7 764.8C1133.45 761.17 1131.53 757.52 1130.4 755.6C1129.27 753.68 1126.65 753.68 1125.9 753.3M1137.3 755.6C1138.07 757.5 1141.52 762.8 1141.9 767C1142.28 771.2 1140.93 777.45 1139.6 780.8C1138.27 784.15 1134.85 786.05 1133.9 787.1M1152.2 752.7L1152.2 792.8M1312.5 766.4L1315.3 784.6M1315.3 777.9C1316.53 776.43 1320.57 770.35 1322.7 769.1C1324.83 767.85 1327.08 768.15 1328.1 770.4C1329.12 772.65 1328.68 780.57 1328.8 782.6M1328.8 776.5C1329.82 775.15 1332.87 769.63 1334.9 768.4C1336.93 767.17 1339.65 766.28 1341 769.1C1342.35 771.92 1342.67 782.6 1343 785.3M1366 775.2C1364.87 773.95 1361.45 767.93 1359.2 767.7C1356.95 767.47 1353.4 771.43 1352.5 773.8C1351.6 776.17 1352.23 780.32 1353.8 781.9C1355.37 783.48 1359.75 784.42 1361.9 783.3C1364.05 782.18 1365.9 776.55 1366.7 775.2M1367.3 772.5C1367.53 775.43 1369.37 786.05 1368.7 790.1C1368.03 794.15 1365.55 795.9 1363.3 796.8C1361.05 797.7 1356.78 796.52 1355.2 795.5C1353.62 794.48 1354.03 791.5 1353.8 790.7M1376.8 769.8L1384.2 786L1395.1 769.1M1421.5 769.2C1421.05 768.78 1420 767.12 1418.8 766.7C1417.6 766.28 1415.53 766.12 1414.3 766.7C1413.07 767.28 1411.57 769.12 1411.4 770.2C1411.23 771.28 1411.9 772.47 1413.3 773.2C1414.7 773.93 1418.07 773.7 1419.8 774.6C1421.53 775.5 1423.3 777.28 1423.7 778.6C1424.1 779.92 1423.43 781.6 1422.2 782.5C1420.97 783.4 1418.18 783.87 1416.3 784C1414.42 784.13 1411.93 784 1410.9 783.3C1409.87 782.6 1410.23 780.38 1410.1 779.8M1433.6 767.7L1433.6 783M1435.3 757.4L1432.9 761.8M1443 766.7L1442.5 781.1M1442.5 779.6C1443 778.45 1444.18 774.6 1445.5 772.7C1446.82 770.8 1448.27 769.03 1450.4 768.2C1452.53 767.37 1456.65 766.95 1458.3 767.7C1459.95 768.45 1460.05 769.98 1460.3 772.7C1460.55 775.42 1459.88 782.12 1459.8 784M1499.7 752.4C1498.4 753.58 1494.07 756.37 1491.9 759.5C1489.73 762.63 1486.92 767.3 1486.7 771.2C1486.48 775.1 1488.53 780.08 1490.6 782.9C1492.67 785.72 1497.68 787.23 1499.1 788.1M1524.4 769.9C1523.32 769.03 1520.5 765.35 1517.9 764.7C1515.3 764.05 1510.85 764.48 1508.8 766C1506.75 767.52 1505.48 771.63 1505.6 773.8C1505.72 775.97 1507.45 778.57 1509.5 779C1511.55 779.43 1515.52 778.23 1517.9 776.4C1520.28 774.57 1522.82 769.4 1523.8 768M1523.8 768L1522.5 774L1521.2 780.3M1532.2 765.4L1530.9 782.3M1530.9 775.1C1531.77 773.92 1533.93 769.52 1536.1 768C1538.27 766.48 1542.6 766.33 1543.9 766M1555.6 766C1554.3 766.22 1549.85 765.78 1547.8 767.3C1545.75 768.82 1543.3 772.72 1543.3 775.1C1543.3 777.48 1544.77 780.52 1547.8 781.6C1550.83 782.68 1559.22 781.6 1561.5 781.6M1569.3 753L1565.4 782.3M1555 767.3L1576.5 766M1585.6 769.9C1584.73 769.58 1581.82 767.13 1580.4 768C1578.98 768.87 1577.1 773.05 1577.1 775.1C1577.1 777.15 1578.77 779.87 1580.4 780.3C1582.03 780.73 1585.38 779.65 1586.9 777.7C1588.42 775.75 1589.07 770.12 1589.5 768.6M1589.5 768.6L1589 776L1588.8 782.9M1599.9 767.3L1600.5 782.3M1600.5 776.4C1601.48 774.88 1604.55 768.38 1606.4 767.3C1608.25 766.22 1610.73 766.97 1611.6 769.9C1612.47 772.83 1611.6 782.4 1611.6 784.9M1640.1 756.7C1638.57 757.47 1633.35 758.72 1630.9 761.3C1628.45 763.88 1626.22 769.03 1625.4 772.2C1624.58 775.37 1625.08 777.5 1626 780.3C1626.92 783.1 1630.08 787.55 1630.9 789M1649.9 761.8C1649.45 761.45 1648.57 759.78 1647.2 759.7C1645.83 759.62 1643.7 759.67 1641.7 761.3C1639.7 762.93 1636.55 766.6 1635.2 769.5C1633.85 772.4 1633.33 775.98 1633.6 778.7C1633.87 781.42 1635.45 784.72 1636.8 785.8C1638.15 786.88 1640.15 786.38 1641.7 785.2C1643.25 784.02 1645.1 781.32 1646.1 778.7C1647.1 776.08 1647.38 772.03 1647.7 769.5C1648.02 766.97 1647.95 764.5 1648 763.5M1652.1 782.5L1651.3 783.6M1658 775.4L1669.5 764L1662.4 783.6M1674.9 764.3L1689 764.3M1674.9 763.8C1674.35 765.65 1671.15 773.5 1671.6 774.9C1672.05 776.3 1675.87 771.57 1677.6 772.2C1679.33 772.83 1681.82 776.53 1682 778.7C1682.18 780.87 1680.07 783.93 1678.7 785.2C1677.33 786.47 1675.25 786.75 1673.8 786.3C1672.35 785.85 1670.63 783.13 1670 782.5M1689 758.6C1690 759.78 1693.92 763.25 1695 765.7C1696.08 768.15 1696.22 770.58 1695.5 773.3C1694.78 776.02 1691.5 780.55 1690.7 782M1698.3 749.9C1699.38 751.35 1703.27 755.07 1704.8 758.6C1706.33 762.13 1707.32 767.03 1707.5 771.1C1707.68 775.17 1706.98 779.57 1705.9 783C1704.82 786.43 1701.82 790.25 1701 791.7M1316.8 843.7L1319.3 861.8M1319.3 855C1320.43 853.53 1323.92 847.45 1326.1 846.2C1328.28 844.95 1331.15 845.2 1332.4 847.5C1333.65 849.8 1333.4 857.92 1333.6 860M1333.6 853.7C1334.85 852.25 1339.02 846.25 1341.1 845C1343.18 843.75 1345.05 843.3 1346.1 846.2C1347.15 849.1 1347.18 859.7 1347.4 862.4M1369.8 852.5C1368.77 851.35 1365.68 846.02 1363.6 845.6C1361.52 845.18 1358.23 848.03 1357.3 850C1356.37 851.97 1356.53 855.95 1358 857.4C1359.47 858.85 1364.02 859.52 1366.1 858.7C1368.18 857.88 1369.77 853.53 1370.5 852.5M1371.1 848.7C1371.2 851.82 1372.53 863.13 1371.7 867.4C1370.87 871.67 1368.08 873.67 1366.1 874.3C1364.12 874.93 1360.95 872.35 1359.8 871.2C1358.65 870.05 1359.3 868.03 1359.2 867.4M1381.7 845L1389.2 863.1L1399.8 846.2M1422.9 849.1L1423 849.6M1492 815.4C1490.78 816.27 1486.6 817.82 1484.7 820.6C1482.8 823.38 1480.77 828.98 1480.6 832.1C1480.43 835.22 1481.97 837.92 1483.7 839.3C1485.43 840.68 1488.57 841.43 1491 840.4C1493.43 839.37 1496.57 836.05 1498.3 833.1C1500.03 830.15 1501.4 825.48 1501.4 822.7C1501.4 819.92 1499.87 817.62 1498.3 816.4C1496.73 815.18 1493.05 815.57 1492 815.4M1506.1 837.3L1503.5 842M1518.6 833.1L1533.1 820.6L1527.9 840.4M1542.5 817.5C1542.07 819.58 1539.3 827.57 1539.9 830C1540.5 832.43 1544.53 830.72 1546.1 832.1C1547.67 833.48 1549.3 836.32 1549.3 838.3C1549.3 840.28 1548.1 842.97 1546.1 844C1544.1 845.03 1538.77 844.42 1537.3 844.5M1470.2 882L1474.9 882.5L1485.3 895L1488.4 861.7M1493.6 887.7L1509.2 875.8L1507.6 894.5M1543 872.6C1541.97 873.65 1538.27 875.95 1536.8 878.9C1535.33 881.85 1533.68 887.7 1534.2 890.3C1534.72 892.9 1537.92 895.18 1539.9 894.5C1541.88 893.82 1544.8 889.32 1546.1 886.2C1547.4 883.08 1548.22 878.07 1547.7 875.8C1547.18 873.53 1543.78 873.13 1543 872.6M1549.8 892.6L1549.9 893.2M1554.5 885.6L1562.8 877.8L1560.2 892.9M1570.6 876.8C1570.43 878.18 1568.65 883.63 1569.6 885.1C1570.55 886.57 1574.67 884.9 1576.3 885.6C1577.93 886.3 1579.4 887.9 1579.4 889.3C1579.4 890.7 1577.93 893.48 1576.3 894C1574.67 894.52 1570.72 892.67 1569.6 892.4" stroke="#3333cc" style="stroke-width:calc(var(--k,1)*2.3px)" fill="none" stroke-linecap="round" stroke-linejoin="round"/>
<path d="M595.8 341.5L595.2 328L594.5 315.7M595.4 313.5L605.6 312.6L609.2 319.2L607.4 322.8L596.3 328.6M586.5 336.6L562.5 361.5M566.5 344.1L562.5 361.5L579.8 356.6M1046.7 317.4L1048 324L1049 329.9M1049.5 327C1049.83 326.17 1050.48 323.4 1051.5 322C1052.52 320.6 1054.63 317.78 1055.6 318.6C1056.57 319.42 1057.02 325.52 1057.3 326.9M1057.3 326.9C1057.75 325.75 1059.1 321.87 1060 320C1060.9 318.13 1062.07 315.37 1062.7 315.7C1063.33 316.03 1063.55 319.73 1063.8 322C1064.05 324.27 1064.13 328.08 1064.2 329.3M1051.7 337.6L1030.4 357.2M1035.7 340.3L1030.4 357.2L1048.5 353.3M872.9 556C871.8 555.32 868.48 551.9 866.3 551.9C864.12 551.9 860.88 554.43 859.8 556C858.72 557.57 858.62 560.32 859.8 561.3C860.98 562.28 864.72 562.58 866.9 561.9C869.08 561.22 871.9 557.98 872.9 557.2M873 554C873.08 556.67 873.42 566.3 873.5 570C873.58 573.7 874.6 574.38 873.5 576.2C872.4 578.02 869.28 580.8 866.9 580.9C864.52 581 860.48 577.48 859.2 576.8M628.5 767.5L651 767.5M629.2 775.2L653.5 775.2M884.8 768.7L907.9 768.7M886 776.8L909.8 776.8M1217.2 764.6L1240.8 764.6M1218.5 772.5L1242.9 772.5M1219.4 846.8L1242.5 846.8M1220.6 855L1245 855" stroke="#3333cc" style="stroke-width:calc(var(--k,1)*2.0px)" fill="none" stroke-linecap="round" stroke-linejoin="round"/>
<path d="M533.1 385.1L592.3 385.1M851.5 543.5L878.2 540.6M868.7 540L878.2 540.6L872.9 548.9M743.7 759.4L766.2 756.9M754.9 753.7L769.9 754.4L764.9 765M784.3 758.7L813 756.2M798.6 752.5L813 755.6L803 765.6M1542.5 817.5L1563.8 820.1" stroke="#3333cc" style="stroke-width:calc(var(--k,1)*1.9px)" fill="none" stroke-linecap="round" stroke-linejoin="round"/>
<path d="M1163.3 387.3L1207.6 387.3M909.5 532.5C908.08 533.25 903.25 534.75 901 537C898.75 539.25 896.58 543.08 896 546C895.42 548.92 896.17 552.75 897.5 554.5C898.83 556.25 901.75 557.08 904 556.5C906.25 555.92 909.5 553.58 911 551C912.5 548.42 913.08 544 913 541C912.92 538 910.92 534.33 910.5 533M612.9 654.2C611.95 653.63 609.3 650.6 607.2 650.8C605.1 651 601.63 653.5 600.3 655.4C598.97 657.3 598.43 660.68 599.2 662.2C599.97 663.72 602.9 665.07 604.9 664.5C606.9 663.93 609.87 660.7 611.2 658.8C612.53 656.9 612.62 654.05 612.9 653.1M612.9 653.1L613.2 659L613.5 665.7M619.2 651.9L619.8 658L620.3 664.5M619.8 657.7C620.55 656.83 622.68 653.47 624.3 652.5C625.92 651.53 628.63 652 629.5 651.9M642.1 653.1C640.95 652.82 636.92 650.83 635.2 651.4C633.48 651.97 631.98 654.7 631.8 656.5C631.62 658.3 632.67 661.33 634.1 662.2C635.53 663.07 638.67 662.07 640.4 661.7C642.13 661.33 643.82 660.28 644.5 660M658.1 642.8L658.4 653L658.7 664.5M647.2 653.1L670.1 650.8M677 654.2C675.85 653.82 672.2 651.32 670.1 651.9C668 652.48 664.97 655.78 664.4 657.7C663.83 659.62 665.17 662.83 666.7 663.4C668.23 663.97 671.88 662.63 673.6 661.1C675.32 659.57 676.43 655.35 677 654.2M677 654.2L678.5 659L680.4 664.5M687.3 650.8L687.6 656L687.9 662.2M687.9 656.5C688.75 655.73 691.38 652.28 693 651.9C694.62 651.52 696.55 652.28 697.6 654.2C698.65 656.12 699.02 661.87 699.3 663.4M713.1 636.5C711.85 637.93 707.13 641.95 705.6 645.1C704.07 648.25 703.13 651.78 703.9 655.4C704.67 659.02 709.15 664.9 710.2 666.8M721.1 640.5C720.33 641.83 717.37 645.45 716.5 648.5C715.63 651.55 715.05 656.98 715.9 658.8C716.75 660.62 719.98 660.73 721.6 659.4C723.22 658.07 725.3 653.95 725.6 650.8C725.9 647.65 724.15 642.22 723.4 640.5C722.65 638.78 721.48 640.5 721.1 640.5M726.5 659.5L726 661M732 650.8L738.8 641.6L737.7 659.9M745.5 641.6L754.8 641.6M745.7 641.6C745.6 642.93 743.97 648.45 745.1 649.6C746.23 650.75 750.88 647.53 752.5 648.5C754.12 649.47 755.08 653.12 754.8 655.4C754.52 657.68 752.32 661.25 750.8 662.2C749.28 663.15 746.55 661.28 745.7 661.1M752 636.5C753.23 637.55 757.78 639.85 759.4 642.8C761.02 645.75 762.47 650.48 761.7 654.2C760.93 657.92 755.95 663.28 754.8 665.1" stroke="#ff00ff" style="stroke-width:calc(var(--k,1)*2.2px)" fill="none" stroke-linecap="round" stroke-linejoin="round"/>
<path d="M810.6 422.2L1090.6 422.2M432.5 809.7L573 809.7" stroke="#00c0ff" style="stroke-width:calc(var(--k,1)*2.6px)" fill="none" stroke-linecap="round" stroke-linejoin="round"/>
<path d="M372.1 427.5C373.25 429.25 376.58 434.47 379 438C381.42 441.53 385.18 448.65 386.6 448.7C388.02 448.75 386.93 440.92 387.5 438.3C388.07 435.68 388.9 434.6 390 433C391.1 431.4 393.42 429.42 394.1 428.7M1488.4 861.7L1554.5 861.7L1605.5 861.2" stroke="#3333cc" style="stroke-width:calc(var(--k,1)*2.4px)" fill="none" stroke-linecap="round" stroke-linejoin="round"/>
<path d="M402.5 434.1L518.6 417.1M503.2 412.9L518.6 417.1L506.1 425.4M1587.2 871.6C1588.17 871.43 1591.87 870.08 1593 870.6C1594.13 871.12 1595.05 873.15 1594 874.7C1592.95 876.25 1585.92 879.38 1586.7 879.9C1587.48 880.42 1596.7 878.15 1598.7 877.8" stroke="#3333cc" style="stroke-width:calc(var(--k,1)*1.6px)" fill="none" stroke-linecap="round" stroke-linejoin="round"/>
<path d="M887.7 523.4L888.3 620M881.2 606.4L888.9 619.5L899.6 601.7M482.4 768.1L499.9 768.1M1515.4 878.9L1530.5 878.9M1522.7 874.2L1523.2 885.1M1570.6 876.3L1583.6 877.3M1584.1 899.3L1584.2 899.9" stroke="#3333cc" style="stroke-width:calc(var(--k,1)*1.8px)" fill="none" stroke-linecap="round" stroke-linejoin="round"/>
<path d="M887.7 565.5C889.48 565.9 893.65 569.08 898.4 567.9C903.15 566.72 910.87 563.35 916.2 558.4C921.53 553.45 927.25 544.63 930.4 538.2C933.55 531.77 934.32 522.87 935.1 519.8" stroke="#ff00ff" style="stroke-width:calc(var(--k,1)*2.5px)" fill="none" stroke-linecap="round" stroke-linejoin="round"/>
<path d="M897.2 545.3L911.4 543.5" stroke="#ff00ff" style="stroke-width:calc(var(--k,1)*1.6px)" fill="none" stroke-linecap="round" stroke-linejoin="round"/>
<path d="M958.9 522.8L982.6 516.3" stroke="#008000" style="stroke-width:calc(var(--k,1)*2.2px)" fill="none" stroke-linecap="round" stroke-linejoin="round"/>
<path d="M974 516.5L982.6 516.3L979 521" stroke="#008000" style="stroke-width:calc(var(--k,1)*2.0px)" fill="none" stroke-linecap="round" stroke-linejoin="round"/>
<path d="M963.6 529.3L969 538.8L981.4 525.8" stroke="#008000" style="stroke-width:calc(var(--k,1)*2.4px)" fill="none" stroke-linecap="round" stroke-linejoin="round"/>
<path d="M782.9 618.7C784.33 621.38 789.32 629.07 791.5 634.8C793.68 640.53 795.63 647.2 796 653.1C796.37 659 794.08 667.35 793.7 670.2M1506.2 795.3L1704.6 795.3" stroke="#ff00ff" style="stroke-width:calc(var(--k,1)*2.6px)" fill="none" stroke-linecap="round" stroke-linejoin="round"/>
<path d="M1120.2 633.9L1242.5 633.9" stroke="#ff00ff" style="stroke-width:calc(var(--k,1)*2.4px)" fill="none" stroke-linecap="round" stroke-linejoin="round"/>
<path d="M1307.4 518C1306.27 519.82 1302.33 524.82 1300.6 528.9C1298.87 532.98 1297.17 538.77 1297 542.5C1296.83 546.23 1298.13 549.57 1299.6 551.3C1301.07 553.03 1303.03 553.85 1305.8 552.9C1308.57 551.95 1313.77 548.03 1316.2 545.6C1318.63 543.17 1320.05 541.08 1320.4 538.3C1320.75 535.52 1319.52 531.68 1318.3 528.9C1317.08 526.12 1314.92 523.42 1313.1 521.6C1311.28 519.78 1308.35 518.6 1307.4 518M1298.5 538.3C1300.23 538.22 1305.6 537.1 1308.9 537.8C1312.2 538.5 1316.73 541.72 1318.3 542.5M1341.2 532.6L1357.8 532.6M1341.2 537.8L1363 537.8M1399.5 525.8C1398.1 525.1 1393.7 521.77 1391.1 521.6C1388.5 521.43 1385.28 523.05 1383.9 524.8C1382.52 526.55 1381.93 530.28 1382.8 532.1C1383.67 533.92 1386.5 535.53 1389.1 535.7C1391.7 535.87 1396.67 534.75 1398.4 533.1C1400.13 531.45 1399.32 527.02 1399.5 525.8M1399.5 526C1399.67 528.33 1400.33 536.22 1400.5 540C1400.67 543.78 1401.37 546.9 1400.5 548.7C1399.63 550.5 1397.9 551.58 1395.3 550.8C1392.7 550.02 1386.63 545.13 1384.9 544M1418.2 522.7C1417.33 522.7 1415.25 520.8 1413 522.7C1410.75 524.6 1406.27 530.28 1404.7 534.1C1403.13 537.92 1402.73 543.08 1403.6 545.6C1404.47 548.12 1407.63 549.38 1409.9 549.2C1412.17 549.02 1415.73 547.02 1417.2 544.5C1418.67 541.98 1418.7 537.73 1418.7 534.1C1418.7 530.47 1417.45 524.6 1417.2 522.7M1434.3 518.5C1433.35 519.02 1430.07 520.03 1428.6 521.6C1427.13 523.17 1425.33 526.58 1425.5 527.9C1425.67 529.22 1428.13 530.02 1429.6 529.5C1431.07 528.98 1433.52 526.63 1434.3 524.8C1435.08 522.97 1434.3 519.55 1434.3 518.5M1441.1 537.8L1459.8 537.3M1449.4 530.5L1450.5 545.6M1484.9 540.9C1483.7 540.3 1480.48 537.3 1477.7 537.3C1474.92 537.3 1470.18 539.1 1468.2 540.9C1466.22 542.7 1465.2 546.1 1465.8 548.1C1466.4 550.1 1469.42 552.7 1471.8 552.9C1474.18 553.1 1477.92 551.3 1480.1 549.3C1482.28 547.3 1484.1 542.3 1484.9 540.9M1484.9 540.9L1486 547L1487.3 552.9M1493.3 539.7L1493.9 546L1494.5 552.9M1493.9 545.7C1495 544.5 1498.6 539.7 1500.5 538.5C1502.4 537.3 1504.5 538.5 1505.3 538.5M1520.8 539.7C1519.6 539.7 1515.7 538.7 1513.6 539.7C1511.5 540.7 1508.6 543.4 1508.2 545.7C1507.8 548 1509.1 552 1511.2 553.5C1513.3 555 1517.8 554.8 1520.8 554.7C1523.8 554.6 1527.8 553.2 1529.2 552.9M1537 520L1534 537L1531.6 552.9M1523.8 536.1L1540 538.5M1550.7 540.9C1549.7 540.3 1546.88 536.9 1544.7 537.3C1542.52 537.7 1538.38 540.9 1537.6 543.3C1536.82 545.7 1538.42 550.5 1540 551.7C1541.58 552.9 1545.32 552.3 1547.1 550.5C1548.88 548.7 1550.1 542.5 1550.7 540.9M1550.7 540.9L1551 547L1551.3 552.9M1559.7 539.7L1560 546L1560.3 552.9M1560.3 546.9C1561.3 545.7 1564.4 540.9 1566.3 539.7C1568.2 538.5 1570.3 537.7 1571.7 539.7C1573.1 541.7 1574.2 549.7 1574.7 551.7M1598 526C1596.7 527.28 1592.1 530.02 1590.2 533.7C1588.3 537.38 1586 544.5 1586.6 548.1C1587.2 551.7 1592.6 554.1 1593.8 555.3M1611.2 526.5C1609.7 527.5 1604.5 529.1 1602.2 532.5C1599.9 535.9 1597.2 543.9 1597.4 546.9C1597.6 549.9 1601 550.9 1603.4 550.5C1605.8 550.1 1610.2 547.7 1611.8 544.5C1613.4 541.3 1613.1 534.3 1613 531.3C1612.9 528.3 1611.5 527.3 1611.2 526.5M1613.5 552L1613.8 553M1623.7 543.3L1640.5 530.1L1630.9 551.1M1649.4 526.5L1665.6 530.1M1649.4 527.1C1648.32 529.4 1642.4 538.7 1642.9 540.9C1643.4 543.1 1650.02 539.3 1652.4 540.3C1654.78 541.3 1657 544.6 1657.2 546.9C1657.4 549.2 1655.58 552.9 1653.6 554.1C1651.62 555.3 1647.98 555.1 1645.3 554.1C1642.62 553.1 1638.8 549.1 1637.5 548.1M1660.8 520.6C1661.8 522.18 1665.6 526.32 1666.8 530.1C1668 533.88 1669.4 539 1668 543.3C1666.6 547.6 1660 553.8 1658.4 555.9" stroke="#ff00ff" style="stroke-width:calc(var(--k,1)*2.0px)" fill="none" stroke-linecap="round" stroke-linejoin="round"/>
<path d="M834.8 741.9L834.8 788.7" stroke="#3333cc" style="stroke-width:calc(var(--k,1)*2.5px)" fill="none" stroke-linecap="round" stroke-linejoin="round"/>
<path d="M1115.6 770.5L1129.3 768.8" stroke="#3333cc" style="stroke-width:calc(var(--k,1)*1.7px)" fill="none" stroke-linecap="round" stroke-linejoin="round"/>
<path d="M1448.8 852.3L1621.1 852.3" stroke="#3333cc" style="stroke-width:calc(var(--k,1)*2.8px)" fill="none" stroke-linecap="round" stroke-linejoin="round"/>

</g>

  <rect x="268" y="160" width="2" height="780" fill="#f00"/>
  <rect x="1796.9" y="160" width="1.3" height="780" fill="#f00"/>
 </g>
</svg>
<!-- sidebar -->
<div class="a" style="left:26px;top:171px;width:150px;height:756px;background:#fff;border-right:1px solid #d0ccc8"></div>
<div class="a" style="left:26px;top:171px;width:149px;height:50px;background:#ebe9e6;border-bottom:1px solid #d8d4d0"></div>
<div class="a" style="left:26px;top:888px;width:149px;height:39px;background:#f6f5f4;border-top:1px solid #d8d4d0"></div>
<div class="a" style="left:30px;top:174px;width:106px;height:42px;background:#f6f5f4"></div>
<svg class="a" style="left:0;top:0" width="300" height="1012" viewBox="0 0 300 1012">
 <rect x="34" y="178" width="42" height="34" rx="6" fill="#d6d1cd"/>
 <rect x="44.5" y="183.5" width="14" height="18" fill="#e8e8e8" stroke="#5a5f60" stroke-width="1.3"/>
 <rect x="50.5" y="187.5" width="15" height="19" fill="#f4f4f4" stroke="#5a5f60" stroke-width="1.3"/>
 <path d="M111 193l5 5l5-5" stroke="#2e3436" stroke-width="2" fill="none"/>
 <path d="M150 191l7.5 7.5M157.5 191l-7.5 7.5" stroke="#2e3436" stroke-width="2.2" fill="none"/>
 <!-- thumbnail -->
 <rect x="38" y="232.5" width="130" height="92" fill="#000" opacity="0.55" filter="url(#blur3)"/>
 <defs><filter id="blur3"><feGaussianBlur stdDeviation="1.8"/></filter></defs>
 <rect x="35.8" y="229.8" width="128.9" height="91.7" rx="1" fill="#fff" stroke="#f00" stroke-width="2.2"/>
 <text x="102" y="340" font-size="16" fill="#f00" text-anchor="middle" font-family="Liberation Sans">1</text>
 <!-- bottom buttons -->
 <rect x="27.5" y="891.5" width="139" height="33" rx="5" fill="#f6f5f4" stroke="#d0ccc8"/>
 <rect x="96.5" y="892" width="35" height="32" fill="#ebe9e6"/>
 <path d="M61.5 892v32M96.5 892v32M131.5 892v32" stroke="#d0ccc8"/>
 <path d="M37.5 912l6.5-6.5l6.5 6.5" stroke="#9a9e9f" stroke-width="2" fill="none"/>
 <path d="M72 905l7 7l7-7" stroke="#9a9e9f" stroke-width="2" fill="none"/>
 <rect x="107" y="901" width="9" height="9" rx="2" fill="none" stroke="#2e3436" stroke-width="1.8"/>
 <rect x="112" y="906" width="9" height="10" rx="2" fill="#ebe9e6" stroke="#2e3436" stroke-width="2"/>
 <circle cx="149" cy="908" r="7" fill="none" stroke="#9a9e9f" stroke-width="1.8"/>
 <path d="M146 905l6 6M152 905l-6 6" stroke="#9a9e9f" stroke-width="1.8"/>
</svg>
<!-- status bar -->
<div class="a" style="left:26px;top:927px;width:1870px;height:56px;background:#f6f5f4;border-top:1px solid #e0dcd8"></div>
<div class="a" style="left:37px;top:946px;font-size:15px;color:#2e3436">Page</div>
<div class="a" style="left:80px;top:932px;width:118px;height:46px;background:#fff;border:1px solid #cdc7c2;border-radius:6px"></div>
<div class="a" style="left:127px;top:933px;width:1px;height:44px;background:#e4e0dc"></div>
<div class="a" style="left:162px;top:933px;width:1px;height:44px;background:#e4e0dc"></div>
<div class="a" style="left:90px;top:946px;font-size:15px;color:#2e3436">1</div>
<div class="a" style="left:139px;top:945px;font-size:15px;color:#c0c0c0">&#x2212;</div>
<div class="a" style="left:174px;top:944px;font-size:16px;color:#c0c0c0">+</div>
<div class="a" style="left:210px;top:946px;font-size:15px;color:#2e3436">of 1</div>
<div class="a" style="left:248px;top:932px;width:1px;height:47px;background:#dcd8d4"></div>
<div class="a" style="left:263px;top:947px;font-size:15px;color:#2e3436">Layer</div>
<div class="a" style="left:310px;top:947px;font-size:15px;font-weight:bold;color:#2e3436">Solution</div>
<svg class="a" style="left:380px;top:945px" width="30" height="25" viewBox="380 945 30 25"><path d="M390.5 956.5l4 4l4-4" stroke="#2e3436" stroke-width="1.6" fill="none"/></svg>
<svg class="a" style="left:1500px;top:927px" width="400" height="56" viewBox="1500 927 400 56">
 <rect x="1524" y="947.5" width="11" height="16.5" fill="#e8e8e8" stroke="#888"/>
 <rect x="1537" y="947.5" width="11" height="16.5" fill="#e8e8e8" stroke="#888"/>
 <rect x="1568" y="945" width="22" height="3" fill="#888"/>
 <rect x="1568.5" y="947.5" width="21" height="17" fill="#f4f4f4" stroke="#888"/>
 <circle cx="1579" cy="966" r="1.5" fill="#555"/>
 <rect x="1611" y="944.5" width="21.5" height="21" rx="4" fill="#2e3436"/>
 <text x="1621.8" y="961" font-size="14" font-weight="bold" fill="#fff" text-anchor="middle" font-family="Liberation Sans">1</text>
 <rect x="1654" y="944.5" width="21.5" height="21" rx="4" fill="#2e3436"/>
 <path d="M1658.5 953v-4.5h4.5M1671 953v-4.5h-4.5M1658.5 957v4.5h4.5M1671 957v4.5h-4.5" stroke="#fff" stroke-width="2" fill="none"/>
 <rect x="1697" y="944.5" width="21.5" height="21" rx="4" fill="#2e3436"/>
 <rect x="1701.5" y="953.5" width="12.5" height="3" fill="#fff"/>
 <rect x="1860.5" y="944.5" width="21" height="21" rx="4" fill="#2e3436"/>
 <path d="M1871 948.5v13M1864.5 955h13" stroke="#fff" stroke-width="3"/>
 <rect x="1742" y="963" width="95" height="4" rx="2" fill="#d8d4d0"/>
 <rect x="1742" y="963" width="62" height="4" rx="2" fill="#3584e4"/>
 <path d="M1789.5 973v6.5M1807.5 973v6.5" stroke="#888" stroke-width="1"/>
 <path d="M1795 966a9.3 9.3 0 1 1 18.6 0q0 4-9.3 13q-9.3-9-9.3-13z" fill="#fbfbfb" stroke="#cdc7c2"/>
 <text x="1804" y="947" font-size="14" fill="#8b8e8f" text-anchor="middle" letter-spacing="1.2" font-family="Liberation Sans">181%</text>
</svg>
<svg class="a" style="left:0;top:0" width="300" height="400" viewBox="0 0 300 400"><g clip-path="url(#thc)"><use href="#page" style="--k:2;--g:1.5;--ts:#444;--tsw:2.5px" transform="translate(36.8 230.8) scale(0.0832) translate(-269.9 -167.7)"/></g></svg></body></html>
